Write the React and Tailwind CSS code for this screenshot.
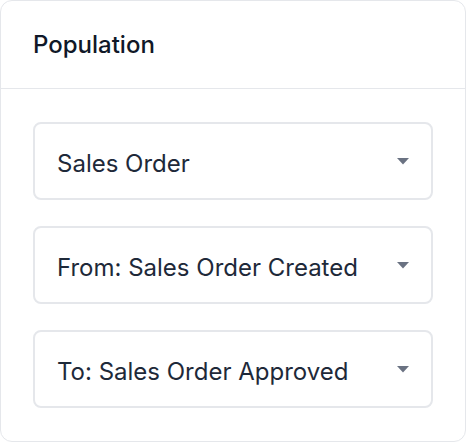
const options = [
  "Sales Order",
  "From: Sales Order Created",
  "To: Sales Order Approved",
];

function Caret() {
  return (
    <svg className="w-3 h-[7px] text-gray-500" viewBox="0 0 12 7" fill="currentColor">
      <path d="M0 0h12L6 6.5z" />
    </svg>
  );
}

export default function App() {
  return (
    <div className="w-[466px] h-[442px] bg-white font-['Inter',sans-serif]">
      <div className="h-full rounded-xl border border-gray-200 bg-white">
        <div className="h-[88px] px-8 flex items-center border-b border-gray-200">
          <h2 className="text-2xl font-medium text-gray-900">Population</h2>
        </div>
        <div className="px-8 pt-[33px] flex flex-col gap-[26px]">
          {options.map((label) => (
            <div
              key={label}
              className="h-[78px] rounded-lg border-2 border-gray-200 px-[22px] flex items-center justify-between"
            >
              <span className="text-2xl text-gray-800 translate-y-[3px]">{label}</span>
              <Caret />
            </div>
          ))}
        </div>
      </div>
    </div>
  );
}
